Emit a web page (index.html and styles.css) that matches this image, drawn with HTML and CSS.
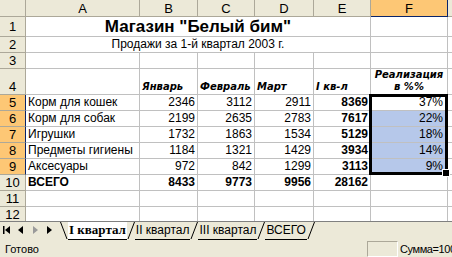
FILE: index.html
```html
<!DOCTYPE html>
<html lang="ru">
<head>
  <meta charset="UTF-8">
  <title>Магазин "Белый бим"</title>
  <link rel="stylesheet" href="styles.css">
</head>
<body>
  <div class="sheet">
    <div class="grid">
      <!-- column headers -->
      <div class="hd"></div>
      <div class="hd">A</div>
      <div class="hd">B</div>
      <div class="hd">C</div>
      <div class="hd">D</div>
      <div class="hd">E</div>
      <div class="hd hd-col-sel">F</div>
      <div class="hd"></div>

      <!-- row 1 -->
      <div class="hd">1</div>
      <div class="cell merged title">Магазин "Белый бим"</div>
      <div class="cell"></div>
      <div class="cell"></div>

      <!-- row 2 -->
      <div class="hd">2</div>
      <div class="cell merged subtitle">Продажи за 1-й квартал 2003 г.</div>
      <div class="cell"></div>
      <div class="cell"></div>

      <!-- row 3 -->
      <div class="hd">3</div>
      <div class="cell"></div>
      <div class="cell"></div>
      <div class="cell"></div>
      <div class="cell"></div>
      <div class="cell"></div>
      <div class="cell"></div>
      <div class="cell"></div>

      <!-- row 4 -->
      <div class="hd hd-tall">4</div>
      <div class="cell"></div>
      <div class="cell caption">Январь</div>
      <div class="cell caption">Февраль</div>
      <div class="cell caption">Март</div>
      <div class="cell caption">I кв-л</div>
      <div class="cell caption caption-wrap"><span>Реализация</span><span>в %%</span></div>
      <div class="cell"></div>

      <!-- rows 5-9 -->
      <div class="hd hd-row-sel">5</div>
      <div class="cell">Корм для кошек</div>
      <div class="cell num">2346</div>
      <div class="cell num">3112</div>
      <div class="cell num">2911</div>
      <div class="cell num bold">8369</div>
      <div class="cell num pct">37%</div>
      <div class="cell"></div>

      <div class="hd hd-row-sel">6</div>
      <div class="cell">Корм для собак</div>
      <div class="cell num">2199</div>
      <div class="cell num">2635</div>
      <div class="cell num">2783</div>
      <div class="cell num bold">7617</div>
      <div class="cell num pct picked">22%</div>
      <div class="cell"></div>

      <div class="hd hd-row-sel">7</div>
      <div class="cell">Игрушки</div>
      <div class="cell num">1732</div>
      <div class="cell num">1863</div>
      <div class="cell num">1534</div>
      <div class="cell num bold">5129</div>
      <div class="cell num pct picked">18%</div>
      <div class="cell"></div>

      <div class="hd hd-row-sel">8</div>
      <div class="cell">Предметы гигиены</div>
      <div class="cell num">1184</div>
      <div class="cell num">1321</div>
      <div class="cell num">1429</div>
      <div class="cell num bold">3934</div>
      <div class="cell num pct picked">14%</div>
      <div class="cell"></div>

      <div class="hd hd-row-sel">9</div>
      <div class="cell">Аксесуары</div>
      <div class="cell num">972</div>
      <div class="cell num">842</div>
      <div class="cell num">1299</div>
      <div class="cell num bold">3113</div>
      <div class="cell num pct picked">9%</div>
      <div class="cell"></div>

      <!-- row 10 -->
      <div class="hd">10</div>
      <div class="cell bold">ВСЕГО</div>
      <div class="cell num bold">8433</div>
      <div class="cell num bold">9773</div>
      <div class="cell num bold">9956</div>
      <div class="cell num bold">28162</div>
      <div class="cell"></div>
      <div class="cell"></div>

      <!-- rows 11-12 -->
      <div class="hd">11</div>
      <div class="cell"></div>
      <div class="cell"></div>
      <div class="cell"></div>
      <div class="cell"></div>
      <div class="cell"></div>
      <div class="cell"></div>
      <div class="cell"></div>

      <div class="hd">12</div>
      <div class="cell"></div>
      <div class="cell"></div>
      <div class="cell"></div>
      <div class="cell"></div>
      <div class="cell"></div>
      <div class="cell"></div>
      <div class="cell"></div>
    </div>
    <!-- selected range F5:F9 -->
    <div class="selection"><span class="handle"></span></div>
  </div>

  <div class="tabbar">
    <div class="tab-nav">
      <svg width="14" height="10" viewBox="0 0 14 10"><rect x="3" y="1" width="1.5" height="8" fill="#000"/><path d="M10 1 L5 5 L10 9 Z" fill="#000"/></svg>
      <svg width="14" height="10" viewBox="0 0 14 10"><path d="M9 1 L4 5 L9 9 Z" fill="#000"/></svg>
      <svg width="14" height="10" viewBox="0 0 14 10"><path d="M5 1 L10 5 L5 9 Z" fill="#9a9a9a"/></svg>
      <svg width="14" height="10" viewBox="0 0 14 10"><path d="M5 1 L10 5 L5 9 Z" fill="#000"/></svg>
    </div>
    <svg class="slant" width="8" height="18" viewBox="0 0 8 18"><path d="M0.5 0 L7 17" stroke="#000" fill="none"/></svg>
    <div class="tab active">I квартал</div>
    <svg class="slant" width="8" height="18" viewBox="0 0 8 18"><path d="M7.5 0 L1 17" stroke="#000" fill="none"/></svg>
    <div class="tab">II квартал</div>
    <svg class="slant" width="8" height="18" viewBox="0 0 8 18"><path d="M7.5 0 L1 17" stroke="#000" fill="none"/></svg>
    <div class="tab">III квартал</div>
    <svg class="slant" width="8" height="18" viewBox="0 0 8 18"><path d="M7.5 0 L1 17" stroke="#000" fill="none"/></svg>
    <div class="tab">ВСЕГО</div>
    <svg class="slant" width="8" height="18" viewBox="0 0 8 18"><path d="M7.5 0 L1 17" stroke="#000" fill="none"/></svg>
  </div>

  <div class="statusbar">
    <span class="status-text">Готово</span>
    <span class="status-panel"></span>
    <span class="status-sum">Сумма=100%</span>
  </div>
</body>
</html>
```

FILE: styles.css
```css
/* General Reset */
html, body {
  margin: 0;
  padding: 0;
}
body {
  width: 452px;
  height: 257px;
  overflow: hidden;
  background-color: #ece9d8;
  font-family: "Liberation Sans", Arial, sans-serif;
  font-size: 12px;
  color: #000;
}

/* Sheet grid */
.sheet {
  position: relative;
  height: 221px;
  overflow: hidden;
}
.grid {
  display: grid;
  grid-template-columns: 25px 113px 57px 56px 58px 56px 76px 1fr;
  grid-template-rows: 16px 19px 15px 15px 25px repeat(8, 15px);
  gap: 1px;
  background-color: #c0c0c0;
}
/* header cells reach over the gap so their lines are darker */
.hd {
  display: flex;
  align-items: center;
  justify-content: center;
  margin: 0 -1px -1px 0;
  border-right: 1px solid #aca899;
  border-bottom: 1px solid #aca899;
  background-color: #ece9d8;
  font-size: 13px;
  line-height: 15px;
}
.hd-tall {
  align-items: flex-end;
}
.hd-col-sel {
  background-color: #fdc775;
  border-color: #0a246a;
}
.hd-row-sel {
  background-color: #fdc775;
  border-right-color: #0a246a;
}
.cell {
  display: flex;
  align-items: flex-end;
  padding: 0 2px;
  background-color: #fff;
  white-space: nowrap;
  overflow: hidden;
  line-height: 15px;
}
.merged {
  grid-column: 2 / 7;
  justify-content: center;
}
.title {
  font-size: 17px;
  font-weight: bold;
  line-height: 19px;
}
.num {
  justify-content: flex-end;
}
.bold {
  font-weight: bold;
}
.caption {
  font-family: "DejaVu Sans", sans-serif;
  font-size: 10px;
  font-weight: bold;
  font-style: italic;
  line-height: 12px;
  padding-bottom: 1px;
}
.caption-wrap {
  flex-direction: column;
  align-items: center;
  justify-content: flex-end;
}
.pct {
  padding-right: 4px;
}
.picked {
  background-color: #b6c8ea;
}

/* Selection frame over F5:F9 */
.selection {
  position: absolute;
  left: 369px;
  top: 94px;
  width: 79px;
  height: 81px;
  box-sizing: border-box;
  border: 3px solid #000;
}
.handle {
  position: absolute;
  right: -5px;
  bottom: -5px;
  width: 6px;
  height: 6px;
  background-color: #000;
  border: 1px solid #fff;
}

/* Sheet tabs */
.tabbar {
  display: flex;
  align-items: flex-start;
  height: 18px;
  border-top: 1px solid #808080;
}
.tab-nav {
  display: flex;
  align-items: center;
  height: 16px;
  width: 60px;
}
.slant {
  flex-shrink: 0;
}
.tab {
  height: 17px;
  line-height: 16px;
  font-size: 12px;
  padding: 0 1px;
  white-space: nowrap;
  border-bottom: 1px solid #000;
}
.tab.active {
  background-color: #fff;
  font-family: "Liberation Serif", "Times New Roman", serif;
  font-weight: bold;
  font-size: 13px;
}

/* Status bar */
.statusbar {
  display: flex;
  align-items: center;
  height: 18px;
  font-size: 11px;
}
.status-text {
  flex: 1;
  padding-left: 5px;
}
.status-panel {
  width: 29px;
  height: 14px;
  border: 1px solid;
  border-color: #aca899 #fff #fff #aca899;
}
.status-sum {
  width: 52px;
  padding-left: 2px;
  white-space: nowrap;
  overflow: hidden;
  letter-spacing: -0.4px;
}
```
